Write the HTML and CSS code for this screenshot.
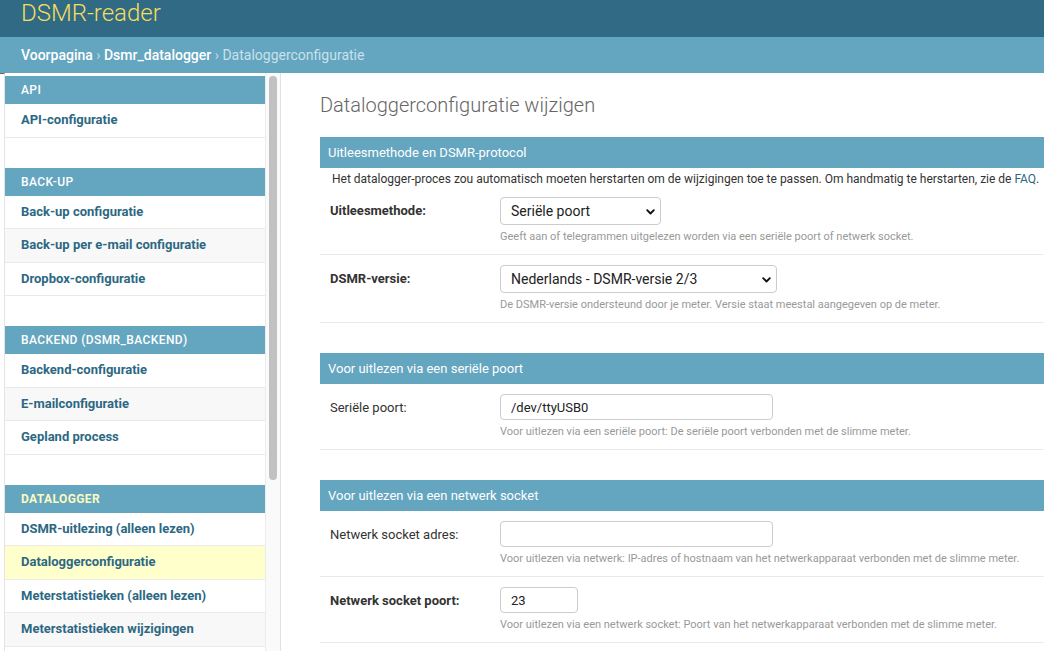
FILE: index.html
```html
<!DOCTYPE html>
<html lang="nl">
<head>
  <meta charset="UTF-8">
  <meta name="viewport" content="width=device-width, initial-scale=1.0">
  <title>Dataloggerconfiguratie wijzigen | DSMR-reader</title>
  <link rel="stylesheet" href="styles.css">
</head>
<body>
  <header class="site-header">
    <div class="branding">DSMR-reader</div>
  </header>

  <div class="breadcrumbs">
    <a href="#">Voorpagina</a> › <a href="#">Dsmr_datalogger</a> › <span class="current">Dataloggerconfiguratie</span>
  </div>

  <div class="page">
    <nav class="sidebar">
      <div class="toggle-strip"></div>
      <div class="nav-list">
        <div class="module">
          <div class="caption">API</div>
          <a class="row" href="#">API-configuratie</a>
        </div>
        <div class="module">
          <div class="caption">Back-up</div>
          <a class="row" href="#">Back-up configuratie</a>
          <a class="row alt" href="#">Back-up per e-mail configuratie</a>
          <a class="row" href="#">Dropbox-configuratie</a>
        </div>
        <div class="module">
          <div class="caption">Backend (dsmr_backend)</div>
          <a class="row" href="#">Backend-configuratie</a>
          <a class="row alt" href="#">E-mailconfiguratie</a>
          <a class="row" href="#">Gepland process</a>
        </div>
        <div class="module current-app">
          <div class="caption">Datalogger</div>
          <a class="row" href="#">DSMR-uitlezing (alleen lezen)</a>
          <a class="row selected" href="#">Dataloggerconfiguratie</a>
          <a class="row" href="#">Meterstatistieken (alleen lezen)</a>
          <a class="row alt" href="#">Meterstatistieken wijzigingen</a>
        </div>
      </div>
      <div class="scroll-track">
        <div class="scroll-thumb"></div>
      </div>
    </nav>

    <main class="content">
      <h1>Dataloggerconfiguratie wijzigen</h1>

      <fieldset class="module">
        <h2>Uitleesmethode en DSMR-protocol</h2>
        <div class="description">Het datalogger-proces zou automatisch moeten herstarten om de wijzigingen toe te passen. Om handmatig te herstarten, zie de <a href="#">FAQ</a>.</div>
        <div class="form-row">
          <label class="required">Uitleesmethode:</label>
          <div class="field">
            <div class="select-wrap">
              <select class="select-short"><option>Seriële poort</option></select>
              <svg class="chevron" width="9" height="6" viewBox="0 0 9 6"><path d="M1.2 1.2 L4.5 4.5 L7.8 1.2" fill="none" stroke="#111" stroke-width="1.9" stroke-linecap="round" stroke-linejoin="round"/></svg>
            </div>
            <div class="help">Geeft aan of telegrammen uitgelezen worden via een seriële poort of netwerk socket.</div>
          </div>
        </div>
        <div class="form-row">
          <label class="required">DSMR-versie:</label>
          <div class="field">
            <div class="select-wrap">
              <select class="select-long"><option>Nederlands - DSMR-versie 2/3</option></select>
              <svg class="chevron" width="9" height="6" viewBox="0 0 9 6"><path d="M1.2 1.2 L4.5 4.5 L7.8 1.2" fill="none" stroke="#111" stroke-width="1.9" stroke-linecap="round" stroke-linejoin="round"/></svg>
            </div>
            <div class="help">De DSMR-versie ondersteund door je meter. Versie staat meestal aangegeven op de meter.</div>
          </div>
        </div>
      </fieldset>

      <fieldset class="module">
        <h2>Voor uitlezen via een seriële poort</h2>
        <div class="form-row">
          <label>Seriële poort:</label>
          <div class="field">
            <input type="text" class="input-wide" value="/dev/ttyUSB0">
            <div class="help">Voor uitlezen via een seriële poort: De seriële poort verbonden met de slimme meter.</div>
          </div>
        </div>
      </fieldset>

      <fieldset class="module">
        <h2>Voor uitlezen via een netwerk socket</h2>
        <div class="form-row">
          <label>Netwerk socket adres:</label>
          <div class="field">
            <input type="text" class="input-wide" value="">
            <div class="help">Voor uitlezen via netwerk: IP-adres of hostnaam van het netwerkapparaat verbonden met de slimme meter.</div>
          </div>
        </div>
        <div class="form-row">
          <label class="required">Netwerk socket poort:</label>
          <div class="field">
            <input type="text" class="input-small" value="23">
            <div class="help">Voor uitlezen via een netwerk socket: Poort van het netwerkapparaat verbonden met de slimme meter.</div>
          </div>
        </div>
      </fieldset>
    </main>
  </div>
</body>
</html>
```

FILE: styles.css
```css
:root {
  --header-bg: #306a85;
  --primary: #64a5c0;
  --link-color: #2c6883;
  --accent: #f5dd5d;
  --hairline: #eaeaea;
  --zebra: #f8f8f8;
  --selected: #ffffcc;
}
* { box-sizing: border-box; margin: 0; padding: 0; }
html, body { height: 100%; overflow: hidden; }
body {
  font-family: Roboto, "Liberation Sans", sans-serif;
  font-size: 13px;
  color: #333;
  background: #fff;
}
a { text-decoration: none; }

/* header + breadcrumbs */
.site-header {
  height: 37px;
  background-color: var(--header-bg);
  padding-left: 21px;
}
.branding {
  color: var(--accent);
  font-size: 24px;
  font-weight: 300;
  line-height: 26px;
}
.breadcrumbs {
  height: 36px;
  background-color: var(--primary);
  color: #c4dce8;
  padding-left: 21px;
  font-size: 14px;
  line-height: 36px;
}
.breadcrumbs a { color: #fff; font-weight: 500; }
.breadcrumbs .current { color: #c9e1ec; }

/* layout */
.page {
  display: flex;
  height: calc(100% - 73px);
}

/* sidebar */
.sidebar {
  display: flex;
  flex: 0 0 281px;
}
.toggle-strip {
  width: 5px;
  border-top: 1px solid #666;
  border-right: 1px solid #e4e4e4;
}
.nav-list {
  width: 260px;
  padding-top: 3px;
}
.sidebar .module { margin-bottom: 30px; }
.caption {
  background-color: var(--primary);
  color: #fff;
  height: 28px;
  line-height: 28px;
  padding-left: 16px;
  font-size: 12px;
  font-weight: 500;
  text-transform: uppercase;
  letter-spacing: 0.4px;
}
.current-app .caption { color: #fcf9c0; font-weight: 700; }
.row {
  display: block;
  height: 33.5px;
  line-height: 32px;
  padding-left: 16px;
  border-bottom: 1px solid var(--hairline);
  color: var(--link-color);
  font-weight: 700;
  font-size: 13px;
}
.row.alt { background-color: var(--zebra); }
.row.selected { background-color: var(--selected); }
.scroll-track {
  width: 16px;
  background-color: #fafafa;
  border-left: 1px solid #ececec;
  border-right: 1px solid #e2e2e2;
  padding: 3px 0 0 3px;
}
.scroll-thumb {
  width: 8px;
  height: 404px;
  border-radius: 4px;
  background-color: #c1c1c1;
}

/* content */
.content {
  flex: 1;
  min-width: 0;
  padding: 20px 0 0 39px;
}
h1 {
  font-size: 20px;
  font-weight: 300;
  color: #666;
  line-height: 24px;
  margin-bottom: 20px;
}
fieldset.module {
  border: none;
  margin-bottom: 30px;
}
fieldset h2 {
  background-color: var(--primary);
  color: #fff;
  font-size: 13px;
  font-weight: 400;
  height: 31px;
  line-height: 31px;
  padding-left: 8px;
}
.description {
  font-size: 12px;
  line-height: 16px;
  padding: 3px 0 0 12px;
  color: #333;
  white-space: nowrap;
}
.description a { color: var(--link-color); }
.form-row {
  display: flex;
  padding: 10px;
  border-bottom: 1px solid var(--hairline);
}
.form-row label {
  flex: 0 0 170px;
  font-size: 13px;
  color: #333;
  line-height: 27px;
}
.form-row label.required { font-weight: 700; }
.field { flex: 1; }
.select-wrap {
  position: relative;
  display: inline-block;
}
select {
  appearance: none;
  -webkit-appearance: none;
  display: block;
  height: 28px;
  border: 1px solid #ccc;
  border-radius: 4px;
  background: #fff;
  font-family: inherit;
  font-size: 14px;
  color: #222;
  padding: 0 10px;
}
.select-short { width: 161px; }
.select-long { width: 277px; }
.chevron {
  position: absolute;
  right: 6px;
  top: 12px;
  pointer-events: none;
}
input[type="text"] {
  display: block;
  height: 26px;
  border: 1px solid #ccc;
  border-radius: 4px;
  font-family: inherit;
  font-size: 13px;
  color: #222;
  padding: 0 10px;
}
.input-wide { width: 273px; }
.input-small { width: 78px; }
.help {
  font-size: 11px;
  color: #999;
  line-height: 14px;
  margin-top: 5px;
}
```
